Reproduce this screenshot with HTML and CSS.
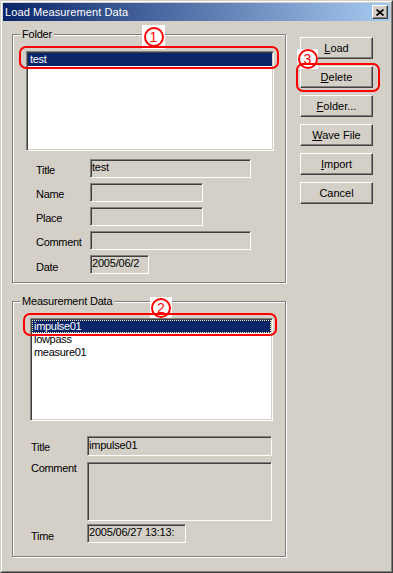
FILE: index.html
```html
<!DOCTYPE html>
<html lang="en">
<head>
    <meta charset="UTF-8">
    <meta name="viewport" content="width=device-width, initial-scale=1.0">
    <title>Load Measurement Data</title>
    <link rel="stylesheet" href="styles.css">
</head>
<body>
    <div class="window">
        <div class="window-inner">
            <div class="titlebar">
                <span class="title">Load Measurement Data</span>
                <button class="close-btn" type="button" aria-label="Close">
                    <svg width="8" height="7" viewBox="0 0 8 7">
                        <path d="M0.5 0.5 L7.5 6.5 M7.5 0.5 L0.5 6.5" stroke="#000" stroke-width="1.7" fill="none"/>
                    </svg>
                </button>
            </div>

            <div class="client">
                <div class="groups">
                    <fieldset class="group group-folder">
                        <legend>Folder</legend>
                        <div class="list-wrap list-wrap-folder">
                            <ul class="listbox listbox-folder">
                                <li class="selected">test</li>
                            </ul>
                            <span class="badge badge-1"><span class="circle">1</span></span>
                            <div class="mark mark-1"></div>
                        </div>

                        <div class="fields fields-folder">
                            <div class="field">
                                <span class="field-label">Title</span>
                                <div class="textbox tb-long">test</div>
                            </div>
                            <div class="field">
                                <span class="field-label">Name</span>
                                <div class="textbox tb-mid"></div>
                            </div>
                            <div class="field">
                                <span class="field-label">Place</span>
                                <div class="textbox tb-mid"></div>
                            </div>
                            <div class="field">
                                <span class="field-label">Comment</span>
                                <div class="textbox tb-long"></div>
                            </div>
                            <div class="field field-date">
                                <span class="field-label">Date</span>
                                <div class="textbox tb-short">2005/06/2</div>
                            </div>
                        </div>
                    </fieldset>

                    <fieldset class="group group-data">
                        <legend>Measurement Data</legend>
                        <div class="list-wrap list-wrap-data">
                            <ul class="listbox listbox-data">
                                <li class="selected focused">impulse01</li>
                                <li>lowpass</li>
                                <li>measure01</li>
                            </ul>
                            <span class="badge badge-2"><span class="circle">2</span></span>
                            <div class="mark mark-2"></div>
                        </div>

                        <div class="fields fields-data">
                            <div class="field">
                                <span class="field-label">Title</span>
                                <div class="textbox tb-wide tb-title">impulse01</div>
                            </div>
                            <div class="field field-comment">
                                <span class="field-label">Comment</span>
                                <div class="textbox tb-wide tb-memo"></div>
                            </div>
                            <div class="field field-time">
                                <span class="field-label">Time</span>
                                <div class="textbox tb-time">2005/06/27 13:13:</div>
                            </div>
                        </div>
                    </fieldset>
                </div>

                <div class="buttons">
                    <button class="btn" type="button"><u>L</u>oad</button>
                    <div class="btn-wrap">
                        <button class="btn" type="button"><u>D</u>elete</button>
                        <span class="badge badge-3"><span class="circle">3</span></span>
                        <div class="mark mark-3"></div>
                    </div>
                    <button class="btn" type="button"><u>F</u>older...</button>
                    <button class="btn" type="button"><u>W</u>ave File</button>
                    <button class="btn" type="button"><u>I</u>mport</button>
                    <button class="btn" type="button">Cancel</button>
                </div>
            </div>
        </div>
    </div>
</body>
</html>
```

FILE: styles.css
```css
:root {
    --face: #d4d0c8;
    --shadow: #808080;
    --dark: #404040;
    --light: #ffffff;
    --select: #0a246a;
    --mark: #ff0000;
    --font: 'Liberation Sans', Arial, sans-serif;
}

* {
    margin: 0;
    padding: 0;
    box-sizing: border-box;
}

body {
    background: var(--face);
    font-family: var(--font);
    font-size: 11px;
    color: #000;
}

/* window frame */

.window {
    width: 393px;
    height: 573px;
    border: 1px solid;
    border-color: var(--face) var(--dark) var(--dark) var(--face);
    background: var(--face);
}

.window-inner {
    height: 100%;
    border: 1px solid;
    border-color: var(--light) var(--shadow) var(--shadow) var(--light);
    padding: 1px;
}

.titlebar {
    height: 18px;
    display: flex;
    align-items: center;
    justify-content: space-between;
    padding: 0 2px;
    background: linear-gradient(to right, #0a246a, #a6caf0);
}

.title {
    color: #fff;
    font-size: 11px;
    line-height: 18px;
    letter-spacing: 0.1px;
}

.close-btn {
    width: 16px;
    height: 14px;
    display: flex;
    align-items: center;
    justify-content: center;
    background: var(--face);
    border: 1px solid;
    border-color: var(--light) var(--dark) var(--dark) var(--light);
    box-shadow: inset -1px -1px 0 var(--shadow);
}

/* client area */

.client {
    display: flex;
    gap: 14px;
    padding: 7px 0 0 9px;
}

.groups {
    width: 274px;
}

.group {
    width: 274px;
    border: 1px solid var(--shadow);
    box-shadow: inset 1px 1px 0 var(--light), 1px 1px 0 var(--light);
    padding: 10px 0 8px;
}

.group legend {
    margin-left: 7px;
    padding: 0 2px;
    line-height: 13px;
    background: var(--face);
    letter-spacing: -0.2px;
}

.group-data {
    margin-top: 12px;
    padding-bottom: 13px;
}

/* list boxes */

.list-wrap {
    position: relative;
}

.list-wrap-folder {
    margin-left: 13px;
    width: 248px;
}

.list-wrap-data {
    margin-left: 17px;
    width: 243px;
}

.listbox {
    list-style: none;
    background: #fff;
    border: 1px solid;
    border-color: var(--shadow) var(--light) var(--light) var(--shadow);
    box-shadow: inset 1px 1px 0 var(--dark), inset -1px -1px 0 var(--face);
    padding: 1px;
    overflow: hidden;
}

.listbox li {
    height: 13px;
    line-height: 13px;
    padding-left: 2px;
    letter-spacing: -0.3px;
    white-space: nowrap;
}

.listbox li.selected {
    background: var(--select);
    color: #fff;
}

.listbox li.focused {
    outline: 1px dotted #f4f0b0;
    outline-offset: -1px;
}

.listbox-folder {
    height: 100px;
}

.listbox-data {
    height: 103px;
}

/* label + text box rows */

.fields-folder {
    margin: 8px 0 0 23px;
}

.fields-data {
    margin: 15px 0 0 18px;
}

.field {
    display: flex;
    align-items: center;
}

.fields-folder .field + .field {
    margin-top: 5px;
}

.field-label {
    width: 54px;
    padding-top: 2px;
    letter-spacing: -0.3px;
    white-space: nowrap;
}

.field-date .field-label {
    padding-top: 5px;
}

.fields-data .field-label {
    width: 56px;
}

.field-comment {
    align-items: flex-start;
    margin-top: 6px;
}

.field-comment .field-label {
    padding-top: 0;
}

.field-time {
    margin-top: 3px;
}

.field-time .field-label {
    padding-top: 4px;
}

.textbox {
    height: 19px;
    line-height: 15px;
    padding-left: 1px;
    background: var(--face);
    border: 1px solid;
    border-color: var(--shadow) var(--light) var(--light) var(--shadow);
    box-shadow: inset 1px 1px 0 var(--dark), inset -1px -1px 0 var(--face);
    white-space: nowrap;
    overflow: hidden;
    letter-spacing: -0.2px;
}

.tb-long { width: 161px; }
.tb-mid { width: 113px; }
.tb-short { width: 59px; }
.tb-wide { width: 185px; }
.tb-title { height: 20px; line-height: 16px; }
.tb-memo { height: 59px; }
.tb-time { width: 99px; }

/* buttons */

.buttons {
    display: flex;
    flex-direction: column;
    gap: 7px;
    margin-top: 9px;
    width: 73px;
}

.btn-wrap {
    position: relative;
}

.btn {
    width: 73px;
    height: 22px;
    font-family: var(--font);
    font-size: 11px;
    color: #000;
    background: var(--face);
    border: 1px solid;
    border-color: var(--light) var(--dark) var(--dark) var(--light);
    box-shadow: inset -1px -1px 0 var(--shadow);
}

/* red annotations drawn over the dialog */

.mark {
    position: absolute;
    border: 2px solid var(--mark);
    border-radius: 7px;
}

.mark-1 { left: -7px; top: -5px; width: 260px; height: 23px; }
.mark-2 { left: -7px; top: -5px; width: 254px; height: 23px; }
.mark-3 { left: -4px; top: -3px; width: 84px; height: 29px; }

.badge {
    position: absolute;
    display: flex;
    align-items: center;
    justify-content: center;
    background: #fff;
}

.circle {
    width: 20px;
    height: 20px;
    border: 2px solid var(--mark);
    border-radius: 50%;
    color: var(--mark);
    font-size: 14px;
    line-height: 16px;
    text-align: center;
}

.badge-1 { left: 116px; top: -26px; width: 23px; height: 24px; }
.badge-2 { left: 120px; top: -21px; width: 22px; height: 21px; }
.badge-3 { left: -3px; top: -17px; width: 21px; height: 20px; }
```
